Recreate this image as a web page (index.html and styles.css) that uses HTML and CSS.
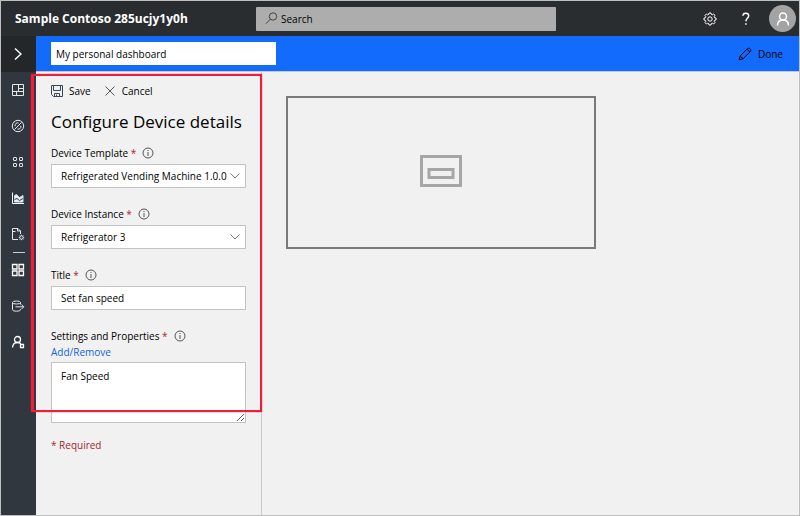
FILE: index.html
```html
<!DOCTYPE html>
<html lang="en">
<head>
<meta charset="utf-8">
<meta name="viewport" content="width=device-width, initial-scale=1">
<title>Sample Contoso 285ucjy1y0h</title>
<link rel="stylesheet" href="styles.css">
</head>
<body>
<div class="app">
  <header class="topbar">
    <h1 class="brand">Sample Contoso 285ucjy1y0h</h1>
    <div class="search">
      <svg class="search-icon" width="13" height="13" viewBox="0 0 13 13"><circle cx="8" cy="4.500" r="3.700"/><path d="M5.300 7.200 1 11.700"/></svg>
      <input type="search" aria-label="Search" placeholder="Search">
    </div>
    <div class="top-actions">
      <button type="button" aria-label="Settings"><svg width="14" height="14" viewBox="0 0 14 14"><path class="bold" d="M5.700 2.400 6 1h2l.3 1.400 1 .4 1.300-.8L12 3.400l-.8 1.300.4 1L13 6v2l-1.400.3-.4 1 .8 1.300-1.400 1.400-1.300-.8-1 .4L8 13H6l-.3-1.400-1-.4-1.300.8L2 10.600l.8-1.300-.4-1L1 8V6l1.400-.3.4-1L2 3.400 3.400 2l1.300.8z"/><circle cx="7" cy="7" r="2.200"/></svg></button>
      <button type="button" aria-label="Help"><svg width="10" height="14" viewBox="0 0 10 14"><path class="help-stroke" d="M2 3.800C2 2 3.200 1.200 4.800 1.200S7.700 2.200 7.700 3.800C7.700 6.200 4.900 6.300 4.900 9.200M4.900 11.200v1.600"/></svg></button>
      <button type="button" class="avatar" aria-label="Account"><svg width="14" height="14" viewBox="0 0 14 14"><circle cx="7" cy="4.500" r="3.500"/><path d="M1.500 13.500c0-3.500 2.300-5.500 5.500-5.500s5.500 2 5.500 5.500"/></svg></button>
    </div>
  </header>
  <div class="body">
    <nav class="rail" aria-label="Main">
      <button type="button" class="expand" aria-label="Expand"><svg width="8" height="14" viewBox="0 0 8 14"><path d="m1 1.500 6 5.500-6 5.500"/></svg></button>
      <a href="#" aria-label="Dashboard"><svg width="14" height="14" viewBox="0 0 14 14"><path d="M1.500 1.500h11v11h-11zM7.500 1.500v7M1.500 8.500h11M5.500 8.500v4M7.500 5.500h5"/></svg></a>
      <a href="#" aria-label="Devices"><svg width="14" height="14" viewBox="0 0 14 14"><circle cx="7" cy="7" r="5.700"/><path d="M3.500 10.500 10.500 3.500M4.200 7.200C3.500 5 5.500 3.300 7.500 4M9.800 6.800c.7 2.200-1.300 3.900-3.300 3.200"/></svg></a>
      <a href="#" aria-label="Device groups"><svg width="14" height="14" viewBox="0 0 14 14"><rect x="2.500" y="2.500" width="3" height="3" rx=".5"/><rect x="8.500" y="2.500" width="3" height="3" rx=".5"/><rect x="2.500" y="8.500" width="3" height="3" rx=".5"/><rect x="8.500" y="8.500" width="3" height="3" rx=".5"/></svg></a>
      <a href="#" class="analytics" aria-label="Analytics"><svg width="14" height="14" viewBox="0 0 14 14"><path class="axis" d="M1.500 1.500v11h11.500"/><path class="area" d="M3.500 4.500 5.500 3.500 8.500 6.500 12 4.500v6.500H3.500z"/><path class="trend" d="m3.500 8.500 2.500-1 2.500 2 3.500-2"/></svg></a>
      <a href="#" aria-label="Jobs"><svg width="14" height="14" viewBox="0 0 14 14"><path d="M7 12.500H1.500v-11H7l2.500 2.500v3M6.500 1.500V4h3M1.500 4.500h3"/><circle cx="10.500" cy="10.500" r="1.700"/><path d="M10.500 7.800v1M10.500 12.200v1M7.800 10.500h1M12.200 10.500h1M8.600 8.600l.7.700M11.700 11.700l.7.700M12.400 8.600l-.7.700M9.300 11.700l-.7.700"/></svg></a>
      <a href="#" class="divided" aria-label="Device templates"><svg width="14" height="14" viewBox="0 0 14 14"><path class="bold" d="M1.500 1.500h4.500v4.500H1.500zM8 1.500h4.500v4.500H8zM1.500 8h4.500v4.500H1.500zM8 8h4.500v4.500H8z"/></svg></a>
      <a href="#" aria-label="Data export"><svg width="14" height="14" viewBox="0 0 14 14"><ellipse cx="5.500" cy="3.500" rx="4" ry="1.500"/><path d="M1.500 3.500v7.200c0 2 8 2 8 0V10M9.500 3.500v2M4.500 7.800h8.300M10.500 5.500l2.300 2.300-2.300 2.300"/></svg></a>
      <a href="#" aria-label="Administration"><svg width="14" height="14" viewBox="0 0 14 14"><circle class="bold" cx="6.500" cy="4.500" r="3"/><path class="bold" d="M1.500 12.500c.3-3 2-5 5-5 1.500 0 2.500.4 3.300 1.200M9.500 9.500h3v3h-3z"/></svg></a>
    </nav>
    <div class="workspace">
      <div class="editbar">
        <input type="text" aria-label="Dashboard name" value="My personal dashboard">
        <button type="button" class="done"><svg width="14" height="14" viewBox="0 0 14 14"><path d="m1.200 12.800 1-3.800 7.500-7.500c1.500-1.200 4 1.200 2.800 2.800L5 11.800zM9 2.200 11.800 5M2.200 9 5 11.800"/></svg>Done</button>
      </div>
      <div class="content">
        <form class="panel">
          <div class="commands">
            <button type="button"><svg width="12" height="12" viewBox="0 0 12 12"><path class="disk" d="M.5.5h11v11h-9l-2-2zM2.500.5v5h7v-5M3.500 11.500v-3h5v3M5.500 9.500v2"/></svg>Save</button>
            <button type="button"><svg width="12" height="12" viewBox="0 0 12 12"><path d="m1.500 1.500 9 9M10.500 1.500l-9 9"/></svg>Cancel</button>
          </div>
          <h2>Configure Device details</h2>
          <div class="field">
            <div class="label-row"><label for="template">Device Template <span class="star">*</span></label><svg class="info" width="12" height="12" viewBox="0 0 12 12"><circle cx="6" cy="6" r="5"/><path d="M6 5v4M6 3v1"/></svg></div>
            <div class="picker"><select id="template"><option>Refrigerated Vending Machine 1.0.0</option></select><svg class="chevron" width="10" height="6" viewBox="0 0 10 6"><path d="m.5.5 4.500 4.500L9.500.5"/></svg></div>
          </div>
          <div class="field">
            <div class="label-row"><label for="instance">Device Instance <span class="star">*</span></label><svg class="info" width="12" height="12" viewBox="0 0 12 12"><circle cx="6" cy="6" r="5"/><path d="M6 5v4M6 3v1"/></svg></div>
            <div class="picker"><select id="instance"><option>Refrigerator 3</option></select><svg class="chevron" width="10" height="6" viewBox="0 0 10 6"><path d="m.5.5 4.500 4.500L9.500.5"/></svg></div>
          </div>
          <div class="field">
            <div class="label-row"><label for="title">Title <span class="star">*</span></label><svg class="info" width="12" height="12" viewBox="0 0 12 12"><circle cx="6" cy="6" r="5"/><path d="M6 5v4M6 3v1"/></svg></div>
            <input id="title" type="text" value="Set fan speed">
          </div>
          <div class="field">
            <div class="label-row"><label for="settings">Settings and Properties <span class="star">*</span></label><svg class="info" width="12" height="12" viewBox="0 0 12 12"><circle cx="6" cy="6" r="5"/><path d="M6 5v4M6 3v1"/></svg></div>
            <a class="add" href="#">Add/Remove</a>
            <textarea id="settings">Fan Speed</textarea>
          </div>
          <p class="required">* Required</p>
        </form>
        <main class="canvas">
          <div class="tile"><svg width="42" height="32" viewBox="0 0 42 32"><path d="M1.500 1.500h39v29h-39zM9 14.500h24v8H9z"/></svg></div>
        </main>
      </div>
    </div>
  </div>
  <div class="highlight"></div>
</div>
</body>
</html>
```

FILE: styles.css
```css
* { box-sizing: border-box; }
body {
  margin: 0;
  font: 10px/16px "Open Sans", "Noto Sans", sans-serif;
  color: #000;
}
button, input, select, textarea { font: inherit; color: inherit; }
button { border: 0; padding: 0; background: none; }
svg { display: block; flex: none; fill: none; stroke: currentColor; }
.app {
  position: relative;
  display: flex;
  flex-direction: column;
  min-height: 100vh;
  border: 1px solid #bfbfbf;
  background: #f1f1f1;
}
.topbar {
  display: grid;
  grid-template-columns: 241px minmax(0, 300px) 1fr;
  align-items: center;
  height: 35px;
  padding: 0 3px 0 14px;
  background: #292d30;
  color: #fff;
}
.brand { margin: 0; font-size: 12px; line-height: 20px; font-weight: 700; white-space: nowrap; }
.search {
  display: flex;
  align-items: center;
  gap: 3px;
  height: 24px;
  padding-left: 9px;
  border-radius: 1px;
  background: #adadad;
  color: #000;
}
.search-icon { color: #444; }
.search input { flex: 1; min-width: 0; border: 0; padding: 0; background: none; outline: 0; }
.search input::placeholder { color: #000; opacity: 1; }
.top-actions { display: flex; justify-content: flex-end; align-items: center; }
.top-actions button { display: grid; place-items: center; width: 36px; height: 32px; }
.help-stroke { stroke-width: 1.5; }
.top-actions .avatar { width: 27px; height: 27px; margin-left: 5px; border-radius: 50%; background: #a3a3a3; }
.avatar svg { stroke-width: 1.5; }
.body { display: flex; flex: 1; }
.rail { display: flex; flex-direction: column; width: 35px; background: #30373e; color: #e6e6e6; }
.rail a, .expand { display: grid; place-items: center; height: 36px; padding-right: 1px; color: inherit; }
.rail .expand { background: #24272a; color: #fff; }
.expand svg { stroke-width: 1.5; }
.rail .bold { stroke: #fff; stroke-width: 1.3; }
.axis { stroke: #fff; }
.area { fill: #e8eef2; stroke: #c5e4f5; }
.trend { stroke: #30373e; }
.rail .divided { background: linear-gradient(#ccc, #ccc) center top / 12px 1px no-repeat; }
.workspace { display: flex; flex: 1; flex-direction: column; min-width: 0; }
.editbar {
  display: flex;
  align-items: center;
  justify-content: space-between;
  height: 36px;
  padding: 0 16px 0 15px;
  border-bottom: 1px solid #c8c8c8;
  background: #136bfb;
}
.editbar input { width: 225px; height: 23px; border: 0; padding: 0 5px; background: #fff; }
.done { display: flex; align-items: center; gap: 6px; }
.content { display: flex; flex: 1; }
.panel { width: 226px; padding: 10px 15px; border-right: 1px solid #c8c8c8; }
.commands { display: flex; gap: 13px; }
.commands button { display: flex; align-items: center; gap: 6px; height: 18px; }
.commands svg { color: #555; }
.commands .disk { stroke: #34465c; }
h2 { margin: 8px 0 9px; font-size: 17px; line-height: 28px; font-weight: 400; white-space: nowrap; }
.field { margin-bottom: 18px; }
.label-row { display: flex; align-items: center; gap: 6px; margin-bottom: 3px; }
.star, .required { color: #a4262c; }
.info { color: #555; }
.picker { position: relative; }
.field input, .field select, .field textarea {
  display: block;
  width: 100%;
  height: 24px;
  margin: 0;
  padding: 0 9px;
  border: 1px solid #c4c4c4;
  border-radius: 0;
  background: #fff;
}
.field select { appearance: none; }
.chevron { position: absolute; right: 6px; top: 9px; color: #777; pointer-events: none; }
.add { display: block; margin: -3px 0 2px; line-height: 16px; color: #1364d8; text-decoration: none; }
.field textarea { height: 61px; padding: 5px 9px; resize: vertical; }
.required { margin: -4px 0 0; }
.canvas { flex: 1; min-width: 0; padding: 24px; }
.tile {
  display: grid;
  place-items: center;
  width: 100%;
  max-width: 310px;
  height: 153px;
  padding-bottom: 4px;
  border: 2px solid #7a7a7a;
}
.tile svg { stroke: #a6a6a6; stroke-width: 3; }
.highlight {
  position: absolute;
  left: 30px;
  top: 73px;
  width: 231px;
  height: 338px;
  border: 2px solid #f01c3a;
  border-left-width: 3px;
  box-shadow: 0 0 1px #f01c3a;
  pointer-events: none;
}
```
